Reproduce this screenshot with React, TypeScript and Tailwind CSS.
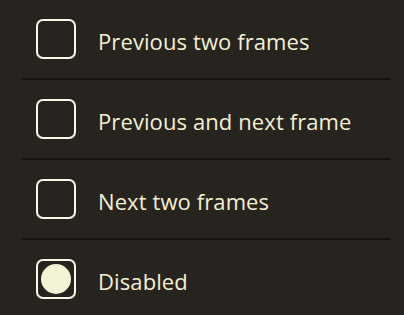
import React from "react";

const items = [
  { label: "Previous two frames", checked: false },
  { label: "Previous and next frame", checked: false },
  { label: "Next two frames", checked: false },
  { label: "Disabled", checked: true },
];

export default function App() {
  return (
    <div
      className="w-[404px] h-[315px] overflow-hidden bg-[#27231e] flex flex-col"
      style={{ fontFamily: '"Open Sans", "Noto Sans", sans-serif' }}
    >
      {items.map((it, i) => (
        <React.Fragment key={it.label}>
          {i > 0 && <div className="h-[2px] shrink-0 ml-[21px] mr-[14px] bg-[#161310]" />}
          <div className="h-[78px] shrink-0 flex items-center pl-[36px] gap-[22px]">
            <div className="w-[40px] h-[40px] shrink-0 rounded-[7px] border-2 border-[#fbf7e6] flex items-center justify-center">
              {it.checked && <div className="w-[30px] h-[30px] rounded-full bg-[#f4f3d6]" />}
            </div>
            <span className="text-[22px] leading-none text-[#f3f0d4] tracking-[0.1px] pt-[3px]">{it.label}</span>
          </div>
        </React.Fragment>
      ))}
    </div>
  );
}
